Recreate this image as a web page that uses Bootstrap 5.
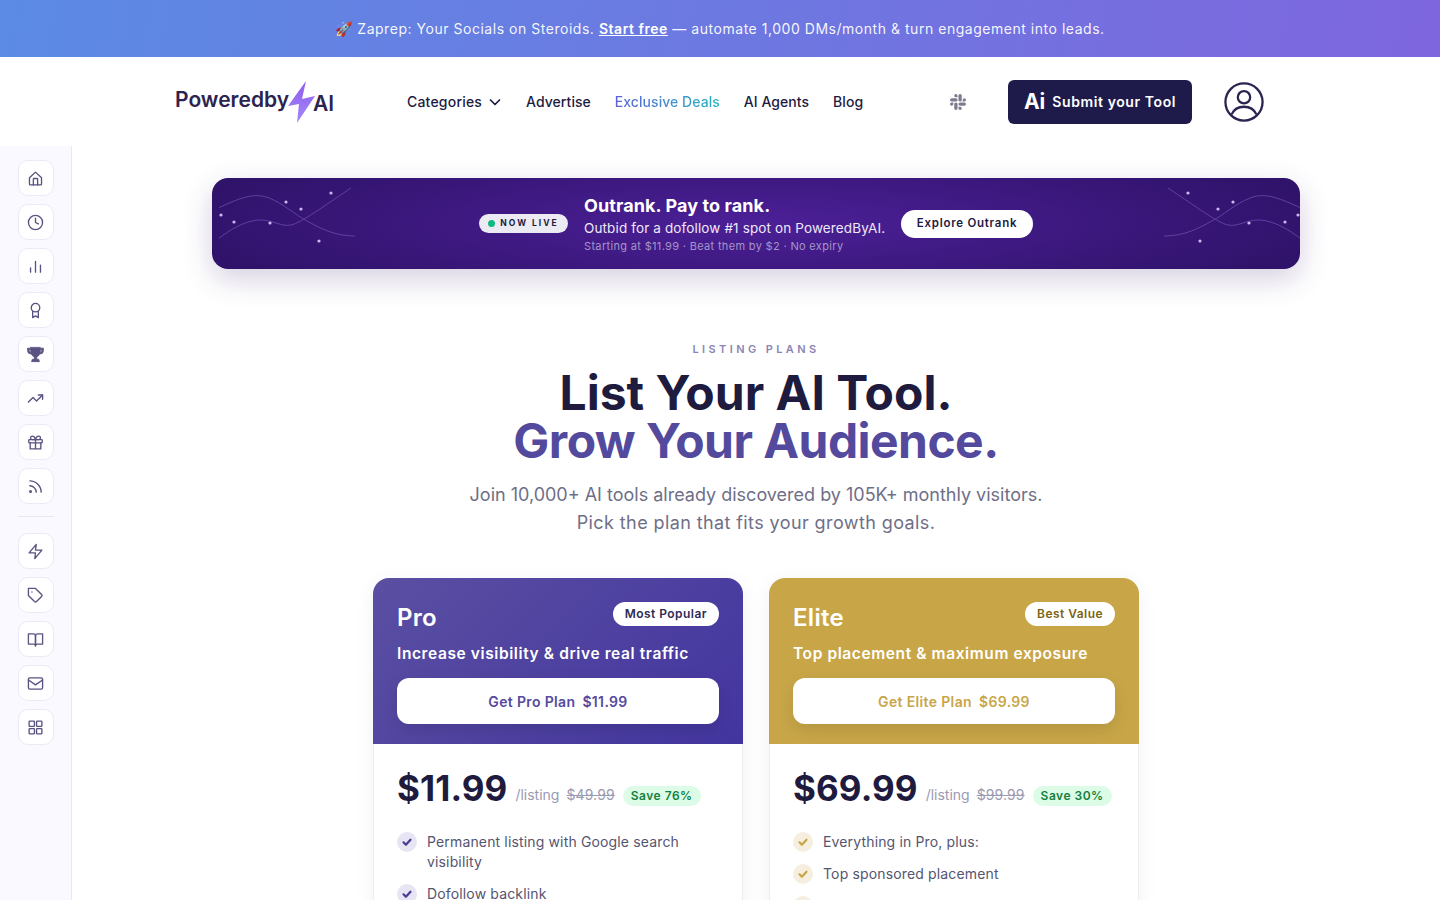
<!DOCTYPE html>
<html lang="en">
<head>
  <meta charset="UTF-8">
  <meta name="viewport" content="width=device-width, initial-scale=1">
  <title>List Your AI Tool - PoweredbyAI</title>
  <link href="https://cdn.jsdelivr.net/npm/bootstrap@5.3.3/dist/css/bootstrap.min.css" rel="stylesheet">
  <style>
    html, body { height: 100%; overflow: hidden; }
    body { font-family: Inter, "Noto Sans", sans-serif; color: #1e1b3f; background: #fff; }

    /* top promo */
    .promo-bar { height: 57px; flex: none; background: linear-gradient(100deg, #5b8be4, #7e66de); color: rgba(255,255,255,.95); font-size: 14px; letter-spacing: .53px; }
    .promo-bar a { color: #fff; font-weight: 600; }

    /* header */
    .site-head { height: 89px; flex: none; }
    .head-inner { width: 1089px; margin-left: 175px; }
    .logo-link { width: 158px; }
    .logo-word { font-weight: 600; font-size: 21px; color: #2b2350; line-height: 1; margin-top: -5px; }
    .logo-bolt { width: 28px; height: 42px; margin: 0 -3px 0 -1px; flex: none; }
    .logo-ai { font-size: 21px; font-weight: 600; color: #2b2350; line-height: 1; margin-top: 3px; }
    .main-links { margin-left: 74px; gap: 24px; }
    .main-links .nav-link { color: #1e1b3f; font-size: 14px; font-weight: 500; padding: 0; letter-spacing: .05px; }
    .main-links .cat-link { gap: 6px; letter-spacing: .2px; }
    .main-links .nav-link.deals { background: linear-gradient(90deg, #5f63d8, #26b3c0); -webkit-background-clip: text; background-clip: text; color: transparent; }
    .slack-mark { margin-left: auto; margin-right: 42px; width: 16px; height: 16px; fill: #7d7d8f; }
    .submit-btn { background: #1e1b4b; color: #fff; width: 184px; height: 44px; border-radius: 6px; font-size: 14px; font-weight: 600; letter-spacing: .6px; border: 0; gap: 7px; padding: 0; }
    .submit-btn:hover { background: #1e1b4b; color: #fff; }
    .submit-ai { font-size: 21px; font-weight: 700; line-height: 1; letter-spacing: 0; }
    .user-mark { width: 40px; height: 40px; margin-left: 32px; flex: none; }

    /* left rail */
    .side-rail { width: 72px; flex: none; background: #faf9ff; border-right: 1px solid #e9e7f3; padding-top: 14px; }
    .rail-btn { width: 36px; height: 36px; flex: none; border: 1px solid #eceaf4; border-radius: 10px; background: #fff; color: #5a5280; }
    .rail-btn svg { width: 17px; height: 17px; fill: none; stroke: currentColor; stroke-width: 1.9; stroke-linecap: round; stroke-linejoin: round; }
    .rail-btn svg.trophy-mark { width: 19px; height: 19px; }
    .rail-sep { width: 36px; height: 1px; flex: none; background: #e9e7f3; margin: 4px 0 8px; }

    /* outrank banner */
    .content-area { min-width: 0; padding-top: 32px; }
    .rank-banner { width: 1088px; height: 91px; margin-left: 140px; border-radius: 16px; background: radial-gradient(ellipse 55% 100% at 50% 50%, #4c2098, #2f1269 100%); box-shadow: 0 10px 30px rgba(46,16,101,.2); overflow: hidden; gap: 16px; }
    .wave-left, .wave-right { position: absolute; top: 0; width: 150px; height: 91px; }
    .wave-left { left: 7px; }
    .wave-right { right: 0; transform: scaleX(-1); }
    .live-pill { background: #ecebf3; color: #1e1b3f; border-radius: 10px; height: 19px; width: 89px; font-size: 8.5px; font-weight: 700; letter-spacing: 2px; gap: 5px; }
    .live-dot { width: 7px; height: 7px; border-radius: 50%; background: #10b981; }
    .rank-title { color: #fff; font-size: 18px; font-weight: 700; letter-spacing: .1px; line-height: 22px; }
    .rank-sub { color: #eee9f8; font-size: 13.5px; letter-spacing: .13px; line-height: 18px; margin-top: 2px; }
    .rank-note { color: #a595c9; font-size: 11px; letter-spacing: .33px; line-height: 17px; margin-top: 1px; }
    .rank-text { width: 301px; margin-top: 2px; white-space: nowrap; }
    .rank-btn { background: #fff; color: #1e1b3f; font-size: 11.5px; font-weight: 600; letter-spacing: .75px; height: 28px; width: 132px; border-radius: 14px; padding: 0; border: 0; }

    /* heading */
    .plans-head { margin-top: 73px; }
    .plans-eyebrow { font-size: 11px; font-weight: 600; letter-spacing: 3.4px; color: #8b85b3; line-height: 14px; }
    .plans-title { font-size: 48px; font-weight: 700; line-height: 48px; color: #1e1b3f; margin: 13px 0 0; }
    .plans-title span { color: #534a9e; letter-spacing: -.55px; }
    .plans-lead { font-size: 18px; line-height: 28px; color: #6f6f88; margin: 16px 0 0; }
    .plans-lead span { letter-spacing: .4px; }

    /* pricing */
    .plan-row { width: 766px; margin: 41px auto 0; gap: 26px; }
    .plan-box { width: 370px; border-radius: 16px; box-shadow: 0 4px 20px rgba(30,27,63,.06); overflow: hidden; background: #fff; }
    .plan-top { height: 166px; padding: 24px 24px 0; color: #fff; }
    .plan-top.pro { background: linear-gradient(135deg, #5a4fa2, #43359f); }
    .plan-top.elite { background: #c8a648; }
    .plan-name { font-size: 24px; font-weight: 600; line-height: 32px; letter-spacing: .3px; margin: 0; }
    .plan-tag { background: #fff; border-radius: 12px; height: 24px; padding: 0 12px; font-size: 12px; font-weight: 600; letter-spacing: .45px; }
    .pro .plan-tag { color: #2f2a56; }
    .elite .plan-tag { color: #7c6412; }
    .plan-desc { font-size: 15.5px; font-weight: 600; line-height: 20px; margin: 10px 0 14px; letter-spacing: .6px; }
    .plan-btn { background: #fff; height: 46px; border-radius: 12px; font-size: 14px; font-weight: 600; border: 0; padding: 0; box-shadow: 0 6px 16px rgba(0,0,0,.1); gap: 7px; letter-spacing: .35px; }
    .pro .plan-btn { color: #554a9e; }
    .elite .plan-btn { color: #c8a648; }
    .plan-body { padding: 24px 23px 0; border: 1px solid #ececf3; border-width: 0 1px; height: 300px; }
    .price-line { height: 40px; margin-bottom: 24px; }
    .price-big { font-size: 35px; font-weight: 700; line-height: 40px; color: #1e1b3f; margin-right: 8px; letter-spacing: .1px; }
    .price-unit { font-size: 14px; color: #9a9ab0; margin-top: 17px; line-height: 20px; }
    .price-old { font-size: 14px; color: #9a9ab0; text-decoration: line-through; margin: 17px 8px 0 7px; line-height: 20px; letter-spacing: .1px; }
    .save-pill { background: #dcfce7; color: #15803d; font-size: 12px; font-weight: 600; letter-spacing: .5px; height: 20px; padding: 0 8px; border-radius: 10px; margin-top: 18px; }
    .perk-list { gap: 12px; font-size: 14px; line-height: 20px; color: #55556f; letter-spacing: .15px; }
    .perk-mark { width: 20px; height: 20px; border-radius: 50%; flex: none; margin-right: 10px; }
    .perk-mark svg { width: 12px; height: 12px; fill: none; stroke: currentColor; stroke-width: 2.2; stroke-linecap: round; stroke-linejoin: round; }
    .perk-list.pro .perk-mark { background: #e7e4f4; color: #463c92; }
    .perk-list.elite .perk-mark { background: #f6efe0; color: #c8a648; }
  </style>
</head>
<body class="d-flex flex-column">
  <div class="promo-bar d-flex align-items-center justify-content-center">
    <span>🚀 Zaprep: Your Socials on Steroids. <a href="#">Start free</a> — automate 1,000 DMs/month &amp; turn engagement into leads.</span>
  </div>

  <header class="site-head d-flex align-items-center">
    <div class="head-inner d-flex align-items-center">
      <a class="logo-link d-flex align-items-center text-decoration-none" href="#">
        <span class="logo-word">Poweredby</span>
        <svg class="logo-bolt" viewBox="0 0 28 42">
          <defs><linearGradient id="boltFill" x1="0" y1="0" x2="0" y2="1"><stop offset="0" stop-color="#8f5cf0"/><stop offset="1" stop-color="#a389f7"/></linearGradient></defs>
          <polygon points="18,0 0,25 11,23 9,42 27,15 14,18" fill="url(#boltFill)"/>
        </svg>
        <span class="logo-ai">AI</span>
      </a>
      <ul class="nav main-links align-items-center">
        <li class="nav-item">
          <a class="nav-link cat-link d-flex align-items-center" href="#">Categories
            <svg width="14" height="14" viewBox="0 0 14 14" fill="none" stroke="#1e1b3f" stroke-width="1.7" stroke-linecap="round" stroke-linejoin="round"><path d="M2.500 5l4.500 4.500L11.500 5"/></svg>
          </a>
        </li>
        <li class="nav-item"><a class="nav-link" href="#">Advertise</a></li>
        <li class="nav-item"><a class="nav-link deals" href="#">Exclusive Deals</a></li>
        <li class="nav-item"><a class="nav-link" href="#">AI Agents</a></li>
        <li class="nav-item"><a class="nav-link" href="#">Blog</a></li>
      </ul>
      <svg class="slack-mark" viewBox="0 0 24 24"><path d="M5.042 15.165a2.528 2.528 0 0 1-2.52 2.523A2.528 2.528 0 0 1 0 15.165a2.527 2.527 0 0 1 2.522-2.52h2.52v2.52zM6.313 15.165a2.527 2.527 0 0 1 2.521-2.52 2.527 2.527 0 0 1 2.521 2.52v6.313A2.528 2.528 0 0 1 8.834 24a2.528 2.528 0 0 1-2.521-2.522v-6.313zM8.834 5.042a2.528 2.528 0 0 1-2.521-2.52A2.528 2.528 0 0 1 8.834 0a2.528 2.528 0 0 1 2.521 2.522v2.52H8.834zM8.834 6.313a2.528 2.528 0 0 1 2.521 2.521 2.528 2.528 0 0 1-2.521 2.521H2.522A2.528 2.528 0 0 1 0 8.834a2.528 2.528 0 0 1 2.522-2.521h6.312zM18.956 8.834a2.528 2.528 0 0 1 2.522-2.521A2.528 2.528 0 0 1 24 8.834a2.528 2.528 0 0 1-2.522 2.521h-2.522V8.834zM17.688 8.834a2.528 2.528 0 0 1-2.523 2.521 2.527 2.527 0 0 1-2.52-2.521V2.522A2.527 2.527 0 0 1 15.165 0a2.528 2.528 0 0 1 2.523 2.522v6.312zM15.165 18.956a2.528 2.528 0 0 1 2.523 2.522A2.528 2.528 0 0 1 15.165 24a2.527 2.527 0 0 1-2.52-2.522v-2.522h2.52zM15.165 17.688a2.527 2.527 0 0 1-2.52-2.523 2.526 2.526 0 0 1 2.52-2.52h6.313A2.527 2.527 0 0 1 24 15.165a2.528 2.528 0 0 1-2.522 2.523h-6.313z"/></svg>
      <a class="btn submit-btn d-flex align-items-center justify-content-center" href="#"><span class="submit-ai">Ai</span> Submit your Tool</a>
      <svg class="user-mark" viewBox="0 0 42 42" fill="none" stroke="#2b2350" stroke-width="2.4">
        <circle cx="21" cy="21" r="19.5"/>
        <circle cx="21" cy="16" r="6.5"/>
        <path d="M8 34c2.500-5.500 7-8 13-8s10.500 2.500 13 8"/>
      </svg>
    </div>
  </header>

  <div class="d-flex flex-grow-1 overflow-hidden">
    <aside class="side-rail d-flex flex-column align-items-center gap-2">
      <a class="rail-btn d-flex align-items-center justify-content-center" href="#"><svg viewBox="0 0 24 24"><path d="M3.500 11 12 3l8.500 8v9a1 1 0 0 1-1 1h-15a1 1 0 0 1-1-1z"/><path d="M9 21v-8a1 1 0 0 1 1-1h4a1 1 0 0 1 1 1v8"/></svg></a>
      <a class="rail-btn d-flex align-items-center justify-content-center" href="#"><svg viewBox="0 0 24 24"><circle cx="12" cy="12" r="10"/><path d="M12 6v6l4 2"/></svg></a>
      <a class="rail-btn d-flex align-items-center justify-content-center" href="#"><svg viewBox="0 0 24 24"><path d="M5 20v-6M12 20V5M19 20V10"/></svg></a>
      <a class="rail-btn d-flex align-items-center justify-content-center" href="#"><svg viewBox="0 0 24 24"><circle cx="12" cy="8" r="6"/><path d="M8 13v9l4-2.500 4 2.500v-9"/></svg></a>
      <a class="rail-btn d-flex align-items-center justify-content-center" href="#"><svg class="trophy-mark" viewBox="0 0 24 24"><path fill="currentColor" stroke-width="1" d="M6 3h12v1h4v3a4.500 4.500 0 0 1-4.500 4.500h-.3A6 6 0 0 1 13.500 15v3H16l1 3H7l1-3h2.500v-3a6 6 0 0 1-3.700-3.500H6.500A4.500 4.500 0 0 1 2 7V4h4zM4 6v1a2.500 2.500 0 0 0 2 2.400V6zm16 0h-2v3.400A2.500 2.500 0 0 0 20 7z"/></svg></a>
      <a class="rail-btn d-flex align-items-center justify-content-center" href="#"><svg viewBox="0 0 24 24"><path d="M2 17l6.500-6.500 5 5L22 7"/><path d="M16 7h6v6"/></svg></a>
      <a class="rail-btn d-flex align-items-center justify-content-center" href="#"><svg viewBox="0 0 24 24"><rect x="2.500" y="8" width="19" height="4.500" rx="1"/><path d="M4.500 12.500V21h15v-8.500M12 8v13M12 8H7.500a2.500 2.500 0 0 1 0-5C11 3 12 8 12 8zM12 8h4.500a2.500 2.500 0 0 0 0-5C13 3 12 8 12 8z"/></svg></a>
      <a class="rail-btn d-flex align-items-center justify-content-center" href="#"><svg viewBox="0 0 24 24"><path d="M4 11a9 9 0 0 1 9 9M4 4a16 16 0 0 1 16 16"/><circle cx="5" cy="19" r="1.200"/></svg></a>
      <div class="rail-sep"></div>
      <a class="rail-btn d-flex align-items-center justify-content-center" href="#"><svg viewBox="0 0 24 24"><polygon points="13,2 3,14 12,14 11,22 21,10 12,10"/></svg></a>
      <a class="rail-btn d-flex align-items-center justify-content-center" href="#"><svg viewBox="0 0 24 24"><path d="M20.590 13.410l-7.170 7.170a2 2 0 0 1-2.830 0L2 12V2h10l8.590 8.590a2 2 0 0 1 0 2.820z"/><path d="M7 7h.01"/></svg></a>
      <a class="rail-btn d-flex align-items-center justify-content-center" href="#"><svg viewBox="0 0 24 24"><path d="M2 4h7a3 3 0 0 1 3 3v14a2.500 2.500 0 0 0-2.500-2.500H2z"/><path d="M22 4h-7a3 3 0 0 0-3 3v14a2.500 2.500 0 0 1 2.500-2.500H22z"/></svg></a>
      <a class="rail-btn d-flex align-items-center justify-content-center" href="#"><svg viewBox="0 0 24 24"><rect x="2" y="4" width="20" height="16" rx="2"/><path d="M2 7l10 7 10-7"/></svg></a>
      <a class="rail-btn d-flex align-items-center justify-content-center" href="#"><svg viewBox="0 0 24 24"><rect x="3" y="3" width="7.500" height="7.500" rx="1"/><rect x="13.500" y="3" width="7.500" height="7.500" rx="1"/><rect x="3" y="13.500" width="7.500" height="7.500" rx="1"/><rect x="13.500" y="13.500" width="7.500" height="7.500" rx="1"/></svg></a>
    </aside>

    <main class="content-area flex-grow-1">
      <div class="rank-banner position-relative d-flex align-items-center justify-content-center">
        <svg class="wave-left" viewBox="0 0 150 91" fill="none">
          <path d="M-5 32C20 20 35 14 50 20S75 36 88 43 115 58 136 58" stroke="#62409f" stroke-width="1"/>
          <path d="M-5 64C15 48 30 42 42 42S62 49 72 47 105 28 132 10" stroke="#62409f" stroke-width="1"/>
          <g fill="#cdb6f5"><circle cx="2" cy="37" r="1.600"/><circle cx="15" cy="44" r="1.600"/><circle cx="51" cy="45" r="1.600"/><circle cx="67" cy="24" r="1.600"/><circle cx="82" cy="31" r="1.600"/><circle cx="112" cy="15" r="1.600"/><circle cx="100" cy="63" r="1.600"/></g>
        </svg>
        <svg class="wave-right" viewBox="0 0 150 91" fill="none">
          <path d="M-5 32C20 20 35 14 50 20S75 36 88 43 115 58 136 58" stroke="#62409f" stroke-width="1"/>
          <path d="M-5 64C15 48 30 42 42 42S62 49 72 47 105 28 132 10" stroke="#62409f" stroke-width="1"/>
          <g fill="#cdb6f5"><circle cx="2" cy="37" r="1.600"/><circle cx="15" cy="44" r="1.600"/><circle cx="51" cy="45" r="1.600"/><circle cx="67" cy="24" r="1.600"/><circle cx="82" cy="31" r="1.600"/><circle cx="112" cy="15" r="1.600"/><circle cx="100" cy="63" r="1.600"/></g>
        </svg>
        <span class="live-pill d-inline-flex align-items-center justify-content-center"><span class="live-dot"></span>NOW LIVE</span>
        <div class="rank-text">
          <div class="rank-title">Outrank. Pay to rank.</div>
          <div class="rank-sub">Outbid for a dofollow #1 spot on PoweredByAI.</div>
          <div class="rank-note">Starting at $11.99 · Beat them by $2 · No expiry</div>
        </div>
        <a class="btn rank-btn d-flex align-items-center justify-content-center" href="#">Explore Outrank</a>
      </div>

      <section class="plans-head text-center">
        <div class="plans-eyebrow">LISTING PLANS</div>
        <h1 class="plans-title">List Your AI Tool.<br><span>Grow Your Audience.</span></h1>
        <p class="plans-lead">Join 10,000+ AI tools already discovered by 105K+ monthly visitors.<br><span>Pick the plan that fits your growth goals.</span></p>
      </section>

      <div class="plan-row d-flex align-items-start">
        <div class="plan-box">
          <div class="plan-top pro">
            <div class="d-flex justify-content-between align-items-start">
              <h2 class="plan-name">Pro</h2>
              <span class="plan-tag d-flex align-items-center">Most Popular</span>
            </div>
            <div class="plan-desc">Increase visibility &amp; drive real traffic</div>
            <a class="btn plan-btn w-100 d-flex align-items-center justify-content-center" href="#"><span>Get Pro Plan</span><span>$11.99</span></a>
          </div>
          <div class="plan-body">
            <div class="price-line d-flex align-items-start">
              <span class="price-big">$11.99</span>
              <span class="price-unit">/listing</span>
              <span class="price-old">$49.99</span>
              <span class="save-pill d-flex align-items-center">Save 76%</span>
            </div>
            <div class="perk-list pro d-flex flex-column">
              <div class="d-flex"><span class="perk-mark d-flex align-items-center justify-content-center"><svg viewBox="0 0 12 12"><path d="M2.500 6.300l2.400 2.400 4.600-5"/></svg></span><span>Permanent listing with Google search visibility</span></div>
              <div class="d-flex"><span class="perk-mark d-flex align-items-center justify-content-center"><svg viewBox="0 0 12 12"><path d="M2.500 6.300l2.400 2.400 4.600-5"/></svg></span><span>Dofollow backlink</span></div>
            </div>
          </div>
        </div>

        <div class="plan-box">
          <div class="plan-top elite">
            <div class="d-flex justify-content-between align-items-start">
              <h2 class="plan-name">Elite</h2>
              <span class="plan-tag d-flex align-items-center">Best Value</span>
            </div>
            <div class="plan-desc">Top placement &amp; maximum exposure</div>
            <a class="btn plan-btn w-100 d-flex align-items-center justify-content-center" href="#"><span>Get Elite Plan</span><span>$69.99</span></a>
          </div>
          <div class="plan-body">
            <div class="price-line d-flex align-items-start">
              <span class="price-big">$69.99</span>
              <span class="price-unit">/listing</span>
              <span class="price-old">$99.99</span>
              <span class="save-pill d-flex align-items-center">Save 30%</span>
            </div>
            <div class="perk-list elite d-flex flex-column">
              <div class="d-flex"><span class="perk-mark d-flex align-items-center justify-content-center"><svg viewBox="0 0 12 12"><path d="M2.500 6.300l2.400 2.400 4.600-5"/></svg></span><span>Everything in Pro, plus:</span></div>
              <div class="d-flex"><span class="perk-mark d-flex align-items-center justify-content-center"><svg viewBox="0 0 12 12"><path d="M2.500 6.300l2.400 2.400 4.600-5"/></svg></span><span>Top sponsored placement</span></div>
              <div class="d-flex"><span class="perk-mark d-flex align-items-center justify-content-center"><svg viewBox="0 0 12 12"><path d="M2.500 6.300l2.400 2.400 4.600-5"/></svg></span></div>
            </div>
          </div>
        </div>
      </div>
    </main>
  </div>

  <script src="https://cdn.jsdelivr.net/npm/bootstrap@5.3.3/dist/js/bootstrap.bundle.min.js"></script>
</body>
</html>
